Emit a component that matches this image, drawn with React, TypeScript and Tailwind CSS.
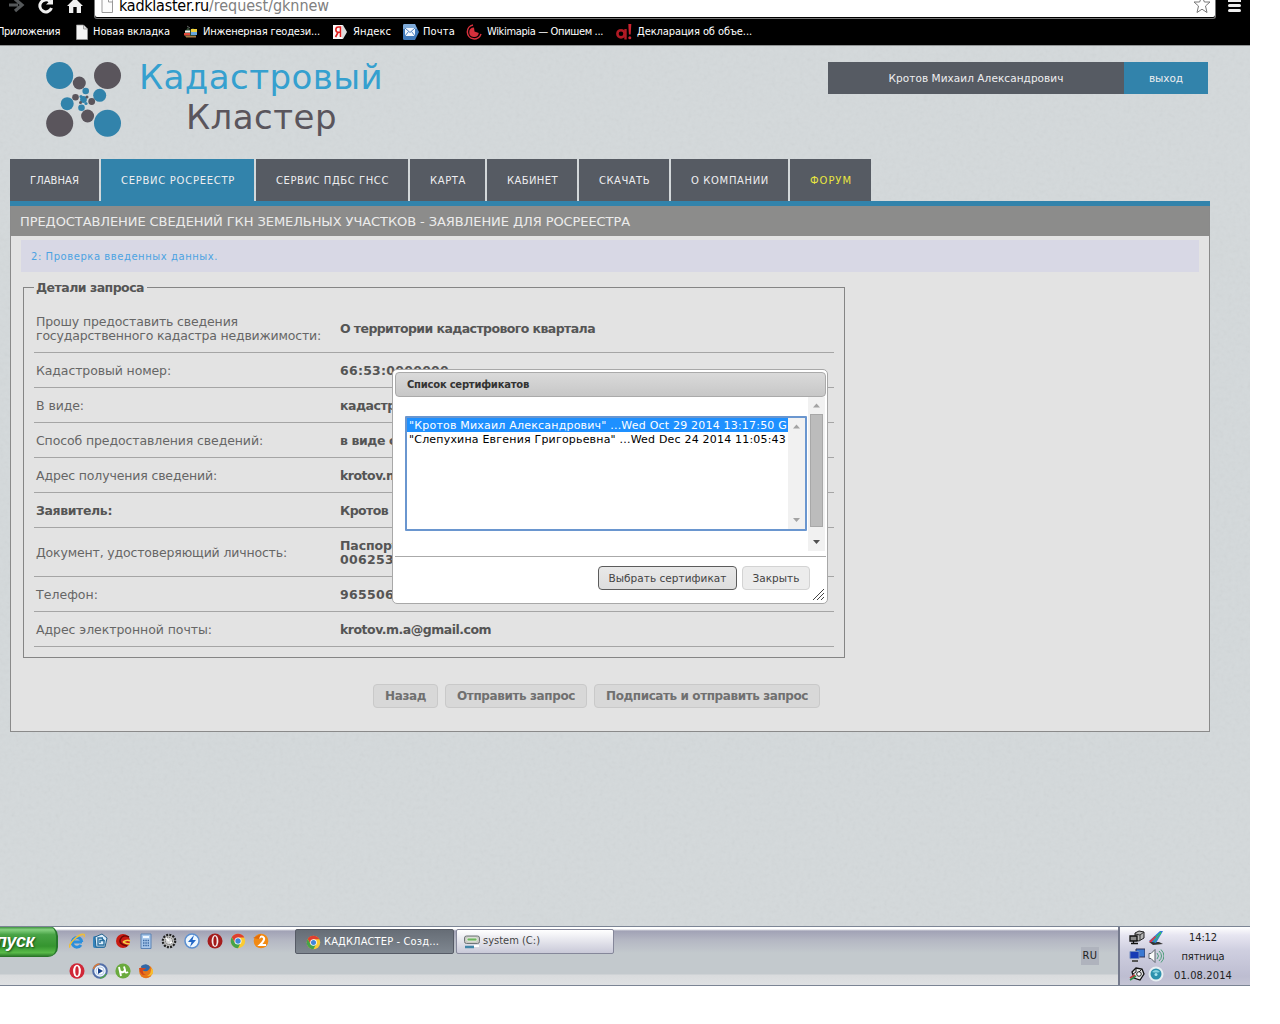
import { useLayoutEffect, useRef, useState, type ReactNode } from "react";

/* Single line of text whose tracking is tuned so that it fills a given width. */
function Fit({ w, children, className = "" }: { w: number; children: string; className?: string }) {
  const ref = useRef<HTMLSpanElement>(null);
  const [spacing, setSpacing] = useState(0);
  useLayoutEffect(() => {
    if (!ref.current) return;
    const natural = ref.current.getBoundingClientRect().width;
    setSpacing((w - natural) / children.length);
  }, []);
  return (
    <span ref={ref} className={`inline-block whitespace-pre ${className}`} style={{ letterSpacing: spacing }}>
      {children}
    </span>
  );
}

function Svg({ children, size = 16, box = "0 0 16 16" }: { children: ReactNode; size?: number; box?: string }) {
  return (
    <svg width={size} height={size} viewBox={box} className="block shrink-0">
      {children}
    </svg>
  );
}

const PageIcon = () => (
  <Svg>
    <path d="M2.500 1h7l4 4v10.500h-11z" fill="#f4f4f4" stroke="#999" strokeWidth=".7" />
    <path d="M9.500 1v4h4" fill="#ddd" stroke="#888" strokeWidth=".7" />
  </Svg>
);
const GeoIcon = () => (
  <Svg>
    <path d="M2 8l3-5 2 3 3-2 2 2 1 7H2z" fill="#324a35" />
    <path d="M2 6.500h5V8.500H2z" fill="#f2f2f2" />
    <path d="M1 9h6v2.500H1z" fill="#e24a3a" />
    <path d="M8 5h6v3H8z" fill="#f0cf3c" />
    <path d="M8 8h6v3H8z" fill="#69a7dd" />
    <path d="M3 12h10v1.500H3z" fill="#a67843" />
    <path d="M4 2l3 2" stroke="#666" />
  </Svg>
);
const YandexIcon = () => (
  <Svg>
    <path d="M1 1h10l4 7-4 7H1z" fill="#dcdcdc" />
    <path d="M1 1h9v14H1z" fill="#fafafa" />
    <path d="M8.500 13V3H6.500a2.600 2.600 0 0 0 0 5.300h2M6 8.500L3.500 13" fill="none" stroke="#e01f1f" strokeWidth="1.600" />
  </Svg>
);
const MailIcon = () => (
  <Svg>
    <path d="M0 1.500Q0 0 1.500 0H12l4 8-4 8H1.500Q0 16 0 14.500z" fill="#4079ba" />
    <path d="M0 1.500Q0 0 1.500 0H12l2 5H0z" fill="#7fabd9" />
    <path d="M2 4h10v8H2z" fill="#f3f8ff" />
    <path d="M2 4l5 4.500L12 4M2 12l3.500-4.500M12 12L8.500 7.500" fill="none" stroke="#4b7fc0" />
  </Svg>
);
const WikimapiaIcon = () => (
  <Svg>
    <path d="M7 1A7 7 0 1 0 15 10" fill="none" stroke="#d8303c" strokeWidth="1.500" />
    <path d="M8 3.500A4.800 4.800 0 1 0 12.800 9L8.500 7.500z" fill="#d8303c" />
  </Svg>
);
const DeclIcon = () => (
  <Svg>
    <circle cx="5" cy="9.800" r="3.600" fill="none" stroke="#b01a24" strokeWidth="2.600" />
    <path d="M9.500 5v10.500" stroke="#b01a24" strokeWidth="2.400" />
    <path d="M12.300 0h3l-.6 10.500h-1.800z" fill="#cc2430" />
    <circle cx="13.800" cy="13.800" r="1.500" fill="#cc2430" />
  </Svg>
);

const bookmarks: { icon: ReactNode; label: string; w: number; lead: string; gap: string }[] = [
  { icon: <PageIcon />, label: "Новая вкладка", w: 77, lead: "ml-[13px]", gap: "gap-[3px]" },
  { icon: <GeoIcon />, label: "Инженерная геодези...", w: 117, lead: "ml-[13px]", gap: "gap-[4px]" },
  { icon: <YandexIcon />, label: "Яндекс", w: 38, lead: "ml-[12px]", gap: "gap-[5px]" },
  { icon: <MailIcon />, label: "Почта", w: 32, lead: "ml-[12px]", gap: "gap-[4px]" },
  { icon: <WikimapiaIcon />, label: "Wikimapia — Опишем ...", w: 116, lead: "ml-[11px]", gap: "gap-[5px]" },
  { icon: <DeclIcon />, label: "Декларация об объе...", w: 115, lead: "ml-[13px]", gap: "gap-[5px]" },
];

function Browser() {
  return (
    <div className="h-[46px] overflow-hidden border-b border-[#8f9293] bg-black font-['DejaVu_Sans_Condensed','DejaVu_Sans',sans-serif]">
      <div className="flex h-[19px] overflow-hidden">
        <svg width="94" height="19" viewBox="0 0 94 19" className="shrink-0">
          <path d="M9 5h9M15-1l7 6-7 6" fill="none" stroke="#55585a" strokeWidth="3.200" />
          <path d="M50 1.500A6 6 0 1 0 51.500 8" fill="none" stroke="#f0f0f0" strokeWidth="3" />
          <path d="M46 4.500h7V-2z" fill="#f0f0f0" />
          <path d="M67 6l8-8 8 8h-2v7h-4.300V7h-3.400v6H69V6z" fill="#f0f0f0" />
        </svg>
        <div className="flex h-[19px] w-[1122px] items-start rounded-b-[3px] border border-t-0 border-[#777] bg-black pb-px">
          <div className="flex h-[17px] flex-1 rounded-b-[2px] bg-white pl-[6px]">
            <svg width="13" height="14" viewBox="0 0 13 14" className="shrink-0">
              <path d="M1 -3h7l3.500 3.500v12H1z" fill="#fcfcfc" stroke="#999" />
              <path d="M7.500-1v3h4" fill="none" stroke="#999" />
            </svg>
            <div className="ml-[5px] flex-1 text-[16px] leading-[12px] text-[#808080]">
              <Fit w={90} className="text-black">kadklaster.ru</Fit>
              <Fit w={120}>/request/gknnew</Fit>
            </div>
            <svg width="18" height="15" viewBox="0 0 18 15" className="mr-[4px] shrink-0">
              <path d="M9-4l2.400 6H17l-4.500 4L14 12.500 9 9.200 4 12.500 5.500 6 1 2h5.600z" fill="#fff" stroke="#777" strokeLinejoin="round" />
            </svg>
          </div>
        </div>
        <div className="ml-[12px] flex w-[13px] flex-col gap-[2px]">
          <i className="h-[2px] bg-[#eee]" />
          <i className="h-[3px] rounded-sm bg-[#eee]" />
          <i className="h-[3px] rounded-sm bg-[#eee]" />
        </div>
      </div>
      <div className="flex h-[26px] items-center text-[11px] leading-[14px] text-white">
        <Fit w={63} className="-ml-[3px]">Приложения</Fit>
        <div className="w-px" />
        {bookmarks.map((b) => (
          <div key={b.label} className={`flex items-center ${b.lead} ${b.gap}`}>
            {b.icon}
            <Fit w={b.w}>{b.label}</Fit>
          </div>
        ))}
      </div>
    </div>
  );
}

const blue = "#3283ab";
const dark = "#5a555c";
const dots: [number, number, number, string][] = [
  [14.700, 14.500, 13.500, blue],
  [62.500, 14.500, 13.500, dark],
  [14.700, 62.300, 13.500, dark],
  [62.500, 62.300, 13.500, blue],
  [34.300, 22, 6.500, dark],
  [54.700, 34.300, 6.500, blue],
  [22.200, 42.700, 6.500, blue],
  [42.600, 55, 6.500, dark],
  [40.700, 30, 3.300, blue],
  [30.500, 36.300, 3.300, dark],
  [46.700, 40.500, 3.400, dark],
  [36.500, 46.700, 3.300, blue],
  [38.500, 38.500, 3.400, blue],
  [42, 36, 1.500, dark],
  [35.500, 41.500, 1.500, dark],
  [41, 42.500, 1.600, blue],
  [36, 35.500, 1.600, blue],
];

function Header() {
  return (
    <header className="flex h-[113px] items-start">
      <svg width="78" height="78" viewBox="0 0 78 78" className="ml-[45px] mt-[15px] shrink-0">
        {dots.map(([x, y, r, c], i) => (
          <circle key={i} cx={x} cy={y} r={r} fill={c} />
        ))}
      </svg>
      <div className="ml-[16px] mt-[11px] flex w-[250px] flex-col text-[34px] leading-[40px]">
        <Fit w={244} className="self-start text-[#35a0cf]">Кадастровый</Fit>
        <Fit w={151} className="ml-[47px] self-start text-[#5a555c]">Кластер</Fit>
      </div>
      <div className="ml-auto mr-[42px] mt-[16px] flex h-[32px] text-[10.500px] leading-[32px] text-[#eeeef0]">
        <div className="w-[296px] bg-[#565b63] text-center"><Fit w={175}>Кротов Михаил Александрович</Fit></div>
        <div className="w-[84px] bg-[#3283ab] text-center"><Fit w={34}>выход</Fit></div>
      </div>
    </header>
  );
}

const tabs: { label: string; text: number; style: string }[] = [
  { label: "ГЛАВНАЯ", text: 49, style: "w-[89px] bg-[#565b63] text-[#eeeef0]" },
  { label: "СЕРВИС РОСРЕЕСТР", text: 114, style: "w-[153px] bg-[#3283ab] text-[#eeeef0]" },
  { label: "СЕРВИС ПДБС ГНСС", text: 113, style: "w-[152px] bg-[#565b63] text-[#eeeef0]" },
  { label: "КАРТА", text: 36, style: "w-[75px] bg-[#565b63] text-[#eeeef0]" },
  { label: "КАБИНЕТ", text: 51, style: "w-[90px] bg-[#565b63] text-[#eeeef0]" },
  { label: "СКАЧАТЬ", text: 51, style: "w-[90px] bg-[#565b63] text-[#eeeef0]" },
  { label: "О КОМПАНИИ", text: 78, style: "w-[117px] bg-[#565b63] text-[#eeeef0]" },
  { label: "ФОРУМ", text: 42, style: "w-[81px] bg-[#565b63] text-[#e8e540]" },
];

type Line = [string, number];
const rows: { left: Line[]; right: Line[]; bold?: boolean; h: string }[] = [
  { left: [["Прошу предоставить сведения", 202], ["государственного кадастра недвижимости:", 285]], right: [["О территории кадастрового квартала", 255]], h: "h-[49px]" },
  { left: [["Кадастровый номер:", 135]], right: [["66:53:0000000", 109]], h: "h-[35px]" },
  { left: [["В виде:", 48]], right: [["кадастрового плана территории", 222]], h: "h-[35px]" },
  { left: [["Способ предоставления сведений:", 227]], right: [["в виде ссылки", 99]], h: "h-[35px]" },
  { left: [["Адрес получения сведений:", 181]], right: [["krotov.m.a@gmail.com", 151]], h: "h-[35px]" },
  { left: [["Заявитель:", 76]], right: [["Кротов Михаил Александрович", 214]], bold: true, h: "h-[35px]" },
  { left: [["Документ, удостоверяющий личность:", 251]], right: [["Паспорт", 59], ["006253", 54]], h: "h-[49px]" },
  { left: [["Телефон:", 62]], right: [["965506", 54]], h: "h-[35px]" },
  { left: [["Адрес электронной почты:", 176]], right: [["krotov.m.a@gmail.com", 151]], h: "h-[35px]" },
];

function Details() {
  return (
    <div className="ml-[12px] mt-[15px] h-[371px] w-[822px] border border-[#858585] px-[10px] text-[12.500px] leading-[14px] text-[#666]">
      <div className="-mt-[7px] h-[23px]">
        <div className="w-[113px] bg-[#e3e3e3] pl-[2px] font-bold text-[#555]"><Fit w={108}>Детали запроса</Fit></div>
      </div>
      {rows.map((r, i) => (
        <div key={i} className={`flex items-center border-b border-[#a5a5a5] pl-[2px] pt-[2px] ${r.h}`}>
          <div className={`flex w-[304px] flex-col items-start ${r.bold ? "font-bold text-[#555]" : ""}`}>
            {r.left.map(([t, w]) => <Fit key={t} w={w}>{t}</Fit>)}
          </div>
          <div className="flex flex-col items-start font-bold text-[#555]">
            {r.right.map(([t, w]) => <Fit key={t} w={w}>{t}</Fit>)}
          </div>
        </div>
      ))}
    </div>
  );
}

const formButtons: { label: string; text: number; width: string }[] = [
  { label: "Назад", text: 41, width: "w-[65px]" },
  { label: "Отправить запрос", text: 118, width: "w-[142px]" },
  { label: "Подписать и отправить запрос", text: 202, width: "w-[226px]" },
];

const Arrow = ({ down = false, dim = false }: { down?: boolean; dim?: boolean }) => (
  <svg width="17" height="17" viewBox="0 0 17 17" className="block">
    <path d={down ? "M5 6h7l-3.500 4z" : "M5 10.500h7L8.500 6.500z"} fill={dim ? "#a3a3a3" : "#505050"} />
  </svg>
);

function Dialog() {
  return (
    <div className="absolute left-[392px] top-[369px] flex h-[235px] w-[436px] flex-col rounded-[5px] border border-[#a8a8a8] bg-white p-[2px] text-[11px] text-[#222]">
      <div className="flex h-[25px] w-[431px] shrink-0 items-center rounded-[4px] border border-[#aaa] bg-linear-to-b from-[#dadada] to-[#c7c7c7] pl-[11px] text-[10px] font-bold text-[#333]">
        <Fit w={122}>Список сертификатов</Fit>
      </div>
      <div className="flex h-[154px] w-[430px] justify-between">
        <div className="ml-[10px] mt-[19px] flex h-[115px] w-[402px] rounded-[1px] border-2 border-[#6a96cf]">
          <div className="flex-1 text-black">
            <div className="h-[14px] bg-[#1e90ff] pl-[2px] leading-[15px] text-white"><Fit w={378}>"Кротов Михаил Александрович" ...Wed Oct 29 2014 13:17:50 G</Fit></div>
            <div className="h-[14px] pl-[2px] leading-[15px]"><Fit w={377}>"Слепухина Евгения Григорьевна" ...Wed Dec 24 2014 11:05:43</Fit></div>
          </div>
          <div className="flex w-[17px] flex-col justify-between bg-[#f1f1f1]">
            <Arrow dim />
            <Arrow dim down />
          </div>
        </div>
        <div className="flex w-[17px] flex-col bg-[#f1f1f1]">
          <Arrow dim />
          <div className="mx-[2px] h-[113px] border border-[#a8a8a8] bg-[#bcbcbc]" />
          <div className="mt-auto"><Arrow down /></div>
        </div>
      </div>
      <div className="mt-[5px] flex w-[431px] flex-1 items-start justify-end gap-[5px] border-t border-[#aaa] pr-[16px] pt-[9px] text-center text-[10.500px] leading-[23px] text-[#444]">
        <div className="h-[24px] w-[139px] rounded-[4px] border border-[#5c5c5c] bg-linear-to-b from-[#e8e8e8] to-[#dedede]"><Fit w={118}>Выбрать сертификат</Fit></div>
        <div className="h-[24px] w-[68px] rounded-[4px] border border-[#d3d3d3] bg-[#ececec]"><Fit w={47}>Закрыть</Fit></div>
      </div>
      <svg width="13" height="13" viewBox="0 0 13 13" className="absolute bottom-[2px] right-[2px]">
        <path d="M1 12L12 1M5 12l7-7M9 12l3-3" stroke="#444" />
      </svg>
    </div>
  );
}

const Chrome = ({ size = 16 }: { size?: number }) => (
  <Svg size={size}>
    <circle cx="8" cy="8" r="7.200" fill="#fbcb32" />
    <path d="M1.800 4.300A7.200 7.200 0 0 1 14.300 4.500H8L4.500 9z" fill="#de3f30" />
    <path d="M1.800 4.300A7.200 7.200 0 0 0 8 15.200L10.500 10 5 10z" fill="#45a349" />
    <circle cx="8" cy="8" r="3.500" fill="#fff" />
    <circle cx="8" cy="8" r="2.700" fill="#4086d8" />
  </Svg>
);

const quickTop: ReactNode[] = [
  <Svg><path d="M13 9H4.500M12.800 9A4.800 4.800 0 1 0 12 12" fill="none" stroke="#2b8fdd" strokeWidth="3" /><path d="M1 14.500C-2 12 10 0 15 1.500q1 .5.3 2.500" fill="none" stroke="#edbe3b" strokeWidth="1.600" /></Svg>,
  <Svg><rect x="1" y="3" width="12" height="12" rx="2" fill="#3484bd" /><path d="M3 4l7-3 5 4-2 9-9 0z" fill="#dceefc" stroke="#21608d" /><path d="M11 5H6v7h6V8M8 10V7.500h4L10 5.500" fill="none" stroke="#276f9f" strokeWidth="1.400" /></Svg>,
  <Svg><circle cx="8" cy="8" r="7" fill="#c91b12" /><path d="M14 4Q8 1 5.500 6T12 13" fill="none" stroke="#6c0906" strokeWidth="1.500" /><path d="M8 9q4-3 7-1M8 9q3 2 7 2" fill="none" stroke="#f5cf45" strokeWidth="1.600" /></Svg>,
  <Svg><path d="M3 1h10v14.500H3z" fill="#a9c8eb" stroke="#5b83b5" /><path d="M5 3h6v2H5z" fill="#eff7ff" /><path d="M5 7.500h6M5 10h6M5 12.500h6" stroke="#3e6ca6" strokeWidth="1.400" strokeDasharray="1.500 .8" /></Svg>,
  <Svg><circle cx="8" cy="8" r="6.200" fill="#bdbdbd" stroke="#222" strokeWidth="2.200" strokeDasharray="2 1.200" /><circle cx="8" cy="8" r="3.500" fill="#d8d8d8" stroke="#555" strokeDasharray="1 1" /><path d="M5 5l3 3M9 10l2-1" stroke="#fff" strokeWidth="1.500" /></Svg>,
  <Svg><circle cx="8" cy="8" r="7" fill="#edf7ff" stroke="#5c8fd0" strokeWidth="1.500" /><path d="M10 2L4 9h3.500L6 14l6-7H8.500z" fill="#2267c7" /></Svg>,
  <Svg><circle cx="8" cy="8" r="7.500" fill="#a51d1d" /><ellipse cx="8" cy="8" rx="3.400" ry="6" fill="#f3eded" /><ellipse cx="8" cy="8" rx="1.600" ry="4.800" fill="#a31818" /></Svg>,
  <Chrome />,
  <Svg><circle cx="8" cy="8" r="7.300" fill="#f28a13" /><path d="M6 5q3-3 5 0 1 2-4 7h6" fill="none" stroke="#fff" strokeWidth="2.200" /><path d="M0 5L8 1 6 6z" fill="#e36c0a" /></Svg>,
];
const quickBottom: ReactNode[] = [
  <Svg><ellipse cx="8" cy="8" rx="7.500" ry="7.800" fill="#d02737" /><ellipse cx="8" cy="8" rx="3.900" ry="6.200" fill="#fff" /><ellipse cx="8" cy="8" rx="1.700" ry="4.800" fill="#d02737" /></Svg>,
  <Svg><circle cx="8" cy="8" r="6.800" fill="#edf5ff" stroke="#536fa8" strokeWidth="2" /><path d="M1.500 6a7 7 0 0 1 6-5" stroke="#dc7b35" strokeWidth="1.500" fill="none" /><path d="M14 11a7 7 0 0 1-6 4" stroke="#54a54a" strokeWidth="1.500" fill="none" /><circle cx="8" cy="8" r="4" fill="#fff" stroke="#b7cbe8" /><path d="M6 5l5 3-5 3z" fill="#183f88" /></Svg>,
  <Svg><circle cx="8" cy="8" r="7.600" fill="#6aaa3e" /><path d="M4 4l2 9M5 8q3 3 5-1l-1-3.500M10 7q0 4 3 2" fill="none" stroke="#fff" strokeWidth="1.900" /></Svg>,
  <Svg><circle cx="8" cy="8.500" r="6.800" fill="#e77718" /><path d="M3 3q6-4 9 1-1 5-6 4L4 7z" fill="#3068aa" /><path d="M1 5q1 8 7 7-4-1-3-5 3-1 3-2z" fill="#d3451d" /><path d="M13 5q1 5-4 8 7 0 6-6z" fill="#f7bd31" /></Svg>,
];

const trayIcons: ReactNode[] = [
  <Svg><path d="M6 3l4-2 5 1v6l-5 3-4-1z" fill="#b5b5b5" stroke="#222" /><path d="M6 4l5 1 4-3M11 5v5" fill="none" stroke="#333" /><path d="M1 6h7v5H1zM2 13.500h7M4.500 11v2" fill="#8a8a8a" stroke="#111" strokeWidth="1.300" /></Svg>,
  <Svg><path d="M1 12l4 3 10-1-4-2z" fill="#333" /><path d="M1 11L12 1l3 0-7 12z" fill="#327cd8" /><path d="M4 11l9-9M6 12l7-9" stroke="#39c954" /><path d="M1 11.500L7 6l1 1-5 5.500z" fill="#db344a" /></Svg>,
  <Svg><path d="M7 1h9v8H7z" fill="#3978d2" stroke="#335" /><path d="M1 3.500h9v7H1z" fill="#173bb5" stroke="#718bbf" /><path d="M3 13h6" stroke="#555" strokeWidth="2" /></Svg>,
  <Svg><path d="M1 5.500h2l4-4v13l-4-4H1z" fill="#fafafa" stroke="#5b626d" /><path d="M9 5q3 3 0 6M11 3q5 5 0 10M13 1.500q6 6.500 0 13" fill="none" stroke="#4c9d78" /></Svg>,
  <Svg><path d="M3 6l4-4 6 1 2 5-4 6-6-2z" fill="#e8e8e8" stroke="#111" strokeWidth="1.300" /><circle cx="10" cy="8" r="2.300" fill="#fff" stroke="#222" /><path d="M7 2v4l-3 2M13 3l-3 3" fill="none" stroke="#222" /><path d="M1 12l5-3" stroke="#c73334" strokeWidth="1.600" /><path d="M1 14l6-4" stroke="#308b48" strokeWidth="1.600" /></Svg>,
  <Svg><circle cx="8" cy="8" r="7.500" fill="#e7eff2" /><circle cx="8" cy="8" r="5.500" fill="#2c91ad" /><path d="M4 6q4-4 8 0-4 1-8 0" fill="#84d1df" /><circle cx="8" cy="8.500" r="1.500" fill="#a8e5f0" /></Svg>,
];

function Taskbar() {
  return (
    <div className="flex h-[60px] overflow-hidden border-y border-[#7b8494] bg-[linear-gradient(to_bottom,#fff_0,#fff_2px,#a1a2b5_4px,#b4b7c3_13px,#c3c9cd_26px,#c3c9cd_47px,#d9dbdd_48px,#dfe1e3_100%)] font-['DejaVu_Sans_Condensed','DejaVu_Sans',sans-serif] text-[11px]">
      <div className="-mt-px flex h-[31px] w-[58px] shrink-0 items-center rounded-r-[10px] border-r-2 border-[#26782b] bg-[linear-gradient(to_bottom,#277c2a,#85d180_12%,#48a345_28%,#35952f_65%,#58ba48_86%,#246d25)] font-['Liberation_Sans',sans-serif] text-[18px] font-bold italic text-white [text-shadow:1px_1px_2px_#174f16]">
        <Fit w={38} className="-ml-[4px]">пуск</Fit>
      </div>
      <div className="ml-[11px] w-[226px] pt-[6px]">
        <div className="flex gap-[7px]">{quickTop.map((x, i) => <div key={i}>{x}</div>)}</div>
        <div className="mt-[14px] flex gap-[7px]">{quickBottom.map((x, i) => <div key={i}>{x}</div>)}</div>
      </div>
      <div className="mt-[2px] flex h-[25px] w-[159px] items-center gap-[3px] rounded-[2px] border border-[#565b66] bg-linear-to-b from-[#666d76] to-[#7f8790] pl-[10px] pt-px text-white">
        <Chrome size={15} />
        <Fit w={115}>КАДКЛАСТЕР - Созд...</Fit>
      </div>
      <div className="ml-[2px] mt-[2px] flex h-[25px] w-[158px] items-center gap-[3px] rounded-[2px] border border-[#85879a] bg-linear-to-b from-[#fff] to-[#c9c9d8] pl-[7px] text-[#444]">
        <Svg>
          <rect x=".5" y="2" width="15" height="7.500" rx="2" fill="#c9c9c3" stroke="#6f7679" />
          <rect x="3" y="4" width="10" height="3" rx="1" fill="#6fb45f" stroke="#fff" strokeWidth=".7" />
          <path d="M1 13h9" stroke="#4186a8" strokeWidth="2.500" />
          <path d="M10 12h5" stroke="#fff" strokeWidth="2" />
        </Svg>
        <Fit w={57}>system (C:)</Fit>
      </div>
      <div className="ml-auto mr-[19px] mt-[20px] h-[18px] w-[18px] bg-[#afb3bd] text-center leading-[18px] text-[#222]"><Fit w={15}>RU</Fit></div>
      <div className="flex h-[58px] w-[132px] border-l-2 border-[#74798c] bg-[linear-gradient(to_bottom,#fff_0,#e7e6f1_14%,#cfcfe0_40%,#bdbdd1_85%,#c5c5d5)]">
        <div className="ml-[9px] mt-[3px] grid h-[52px] w-[36px] grid-cols-2 content-start gap-x-[2px] gap-y-[2px]">
          {trayIcons.map((x, i) => <div key={i}>{x}</div>)}
        </div>
        <div className="flex flex-1 flex-col items-center pr-[9px] pt-[1px] leading-[19px] text-[#222]">
          <Fit w={28}>14:12</Fit>
          <Fit w={43}>пятница</Fit>
          <Fit w={58}>01.08.2014</Fit>
        </div>
      </div>
    </div>
  );
}

export default function App() {
  return (
    <div className="h-[1024px] w-[1280px] overflow-hidden bg-white font-['DejaVu_Sans',sans-serif]">
      <div className="relative h-[986px] w-[1250px] overflow-hidden">
        <Browser />
        <main className="relative isolate h-[880px] bg-[#d4d9db]">
          <svg width="1250" height="880" className="absolute inset-0 -z-10 opacity-[.08]">
            <filter id="paper">
              <feTurbulence type="fractalNoise" baseFrequency=".25" numOctaves="3" seed="4" />
              <feColorMatrix type="saturate" values="0" />
            </filter>
            <rect width="1250" height="880" filter="url(#paper)" />
          </svg>
          <Header />
          <nav className="ml-[10px] flex h-[47px] w-[1200px] gap-[2px] border-b-[5px] border-[#3283ab] text-[10px] leading-[43px]">
            {tabs.map((t) => (
              <div key={t.label} className={`pl-[20px] ${t.style}`}>
                <Fit w={t.text}>{t.label}</Fit>
              </div>
            ))}
          </nav>
          <section className="ml-[10px] h-[526px] w-[1200px] border border-t-0 border-[#8a8a8a] bg-[#e3e3e3]">
            <h1 className="h-[30px] bg-[#8c8c8b] pl-[9px] text-[13px] leading-[31px] text-[#ececec]">
              <Fit w={610}>ПРЕДОСТАВЛЕНИЕ СВЕДЕНИЙ ГКН ЗЕМЕЛЬНЫХ УЧАСТКОВ - ЗАЯВЛЕНИЕ ДЛЯ РОСРЕЕСТРА</Fit>
            </h1>
            <p className="mx-[10px] mt-[4px] h-[32px] bg-[#d8d8e5] pl-[10px] text-[10px] leading-[33px] text-[#4ca3e2]">
              <Fit w={187}>2: Проверка введенных данных.</Fit>
            </p>
            <Details />
            <div className="ml-[362px] mt-[26px] flex gap-[7px] text-center text-[12px] font-bold leading-[23px] text-[#707070]">
              {formButtons.map((b) => (
                <div key={b.label} className={`h-[24px] rounded-[4px] border border-[#c9c9c9] bg-[#d8d8d8] ${b.width}`}>
                  <Fit w={b.text}>{b.label}</Fit>
                </div>
              ))}
            </div>
          </section>
        </main>
        <Taskbar />
        <Dialog />
      </div>
    </div>
  );
}
